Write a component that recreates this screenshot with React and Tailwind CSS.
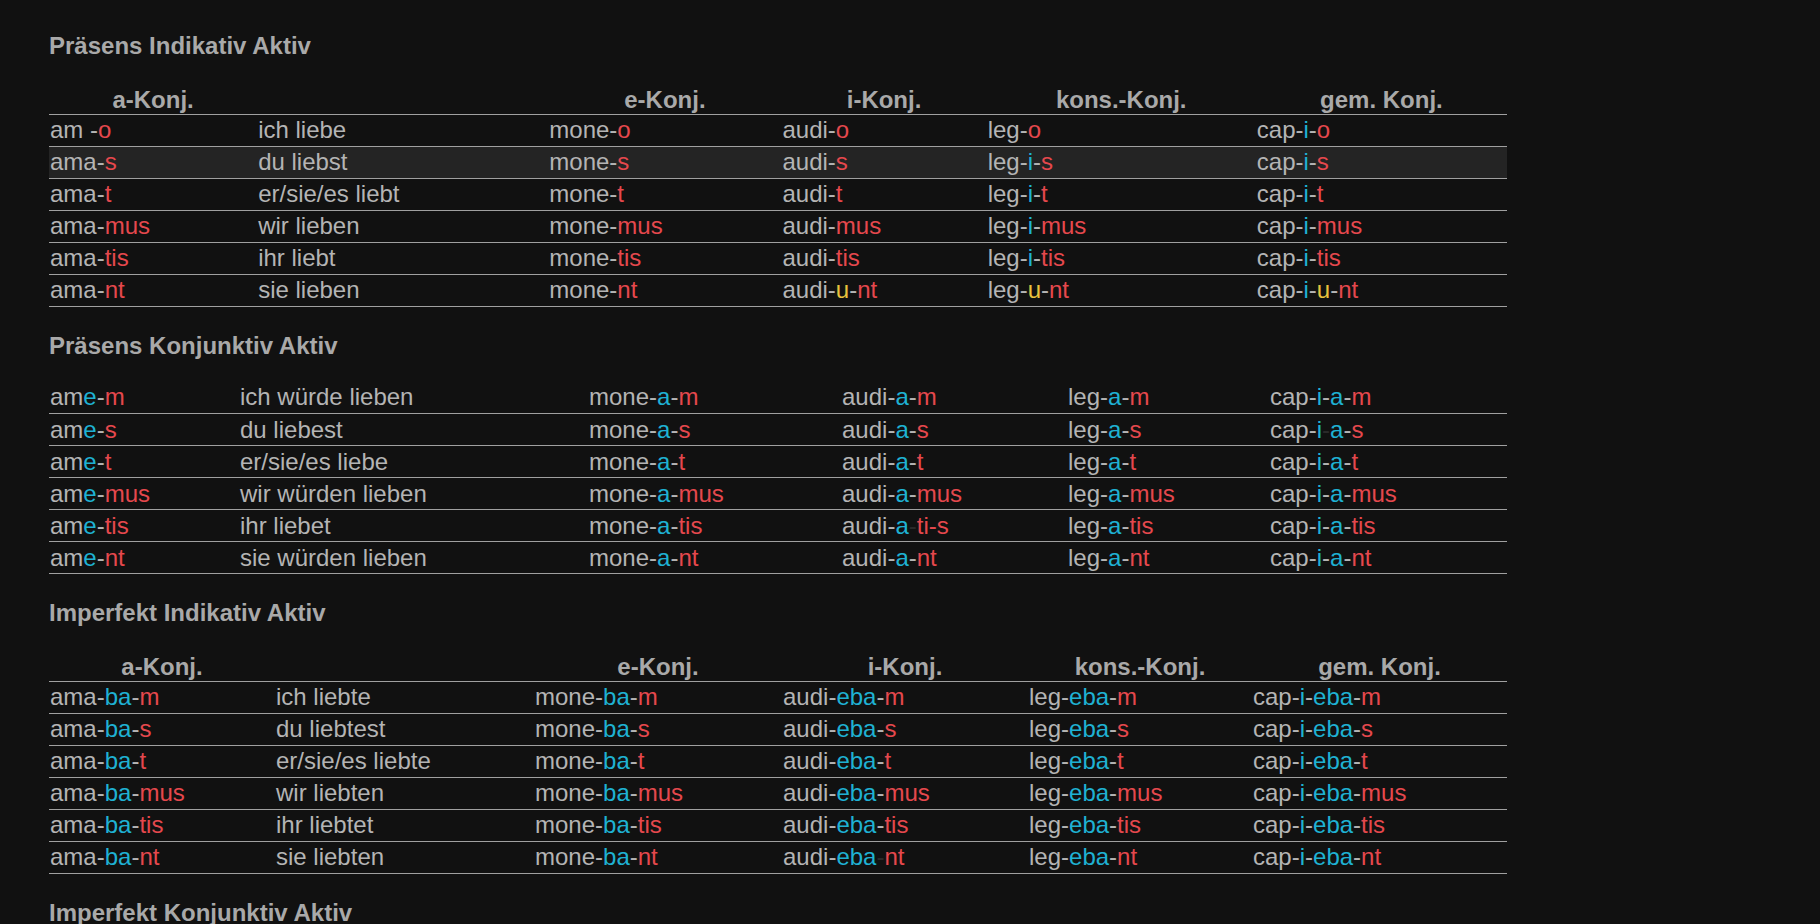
import React from 'react';

const colors = { r: 'text-[#e5484d]', c: 'text-[#1fb1d3]', y: 'text-[#e9c23c]', d: 'text-[#2a2a2a]' };

// "ama-[r:s]" -> segments
const Cell = ({ v }) => {
  const parts = v.split(/(\[[rcyd]:[^\]]*\])/).filter(Boolean);
  return parts.map((p, i) => {
    const m = p.match(/^\[([rcyd]):(.*)\]$/);
    return m ? <span key={i} className={colors[m[1]]}>{m[2]}</span> : <span key={i}>{p}</span>;
  });
};

const sections = [
  {
    title: 'Präsens Indikativ Aktiv',
    widths: [208, 291, 233, 205, 269, 251],
    head: ['a-Konj.', '', 'e-Konj.', 'i-Konj.', 'kons.-Konj.', 'gem. Konj.'],
    highlight: 1,
    rows: [
      ['am -[r:o]', 'ich liebe', 'mone-[r:o]', 'audi-[r:o]', 'leg-[r:o]', 'cap-[c:i]-[r:o]'],
      ['ama-[r:s]', 'du liebst', 'mone-[r:s]', 'audi-[r:s]', 'leg-[c:i]-[r:s]', 'cap-[c:i]-[r:s]'],
      ['ama-[r:t]', 'er/sie/es liebt', 'mone-[r:t]', 'audi-[r:t]', 'leg-[c:i]-[r:t]', 'cap-[c:i]-[r:t]'],
      ['ama-[r:mus]', 'wir lieben', 'mone-[r:mus]', 'audi-[r:mus]', 'leg-[c:i]-[r:mus]', 'cap-[c:i]-[r:mus]'],
      ['ama-[r:tis]', 'ihr liebt', 'mone-[r:tis]', 'audi-[r:tis]', 'leg-[c:i]-[r:tis]', 'cap-[c:i]-[r:tis]'],
      ['ama-[r:nt]', 'sie lieben', 'mone-[r:nt]', 'audi-[y:u]-[r:nt]', 'leg-[y:u]-[r:nt]', 'cap-[c:i]-[y:u]-[r:nt]'],
    ],
  },
  {
    title: 'Präsens Konjunktiv Aktiv',
    widths: [190, 349, 253, 226, 202, 238],
    rows: [
      ['am[c:e]-[r:m]', 'ich würde lieben', 'mone-[c:a]-[r:m]', 'audi-[c:a]-[r:m]', 'leg-[c:a]-[r:m]', 'cap-[c:i]-[c:a]-[r:m]'],
      ['am[c:e]-[r:s]', 'du liebest', 'mone-[c:a]-[r:s]', 'audi-[c:a]-[r:s]', 'leg-[c:a]-[r:s]', 'cap-[c:i][d:-][c:a]-[r:s]'],
      ['am[c:e]-[r:t]', 'er/sie/es liebe', 'mone-[c:a]-[r:t]', 'audi-[c:a]-[r:t]', 'leg-[c:a]-[r:t]', 'cap-[c:i]-[c:a]-[r:t]'],
      ['am[c:e]-[r:mus]', 'wir würden lieben', 'mone-[c:a]-[r:mus]', 'audi-[c:a]-[r:mus]', 'leg-[c:a]-[r:mus]', 'cap-[c:i]-[c:a]-[r:mus]'],
      ['am[c:e]-[r:tis]', 'ihr liebet', 'mone-[c:a]-[r:tis]', 'audi-[c:a][d:-][r:ti-s]', 'leg-[c:a]-[r:tis]', 'cap-[c:i]-[c:a]-[r:tis]'],
      ['am[c:e]-[r:nt]', 'sie würden lieben', 'mone-[c:a]-[r:nt]', 'audi-[c:a]-[r:nt]', 'leg-[c:a]-[r:nt]', 'cap-[c:i]-[c:a]-[r:nt]'],
    ],
  },
  {
    title: 'Imperfekt Indikativ Aktiv',
    widths: [226, 259, 248, 246, 224, 255],
    head: ['a-Konj.', '', 'e-Konj.', 'i-Konj.', 'kons.-Konj.', 'gem. Konj.'],
    rows: [
      ['ama-[c:ba]-[r:m]', 'ich liebte', 'mone-[c:ba]-[r:m]', 'audi-[c:eba]-[r:m]', 'leg-[c:eba]-[r:m]', 'cap-[c:i]-[c:eba]-[r:m]'],
      ['ama-[c:ba]-[r:s]', 'du liebtest', 'mone-[c:ba]-[r:s]', 'audi-[c:eba]-[r:s]', 'leg-[c:eba]-[r:s]', 'cap-[c:i]-[c:eba]-[r:s]'],
      ['ama-[c:ba]-[r:t]', 'er/sie/es liebte', 'mone-[c:ba]-[r:t]', 'audi-[c:eba]-[r:t]', 'leg-[c:eba]-[r:t]', 'cap-[c:i]-[c:eba]-[r:t]'],
      ['ama-[c:ba]-[r:mus]', 'wir liebten', 'mone-[c:ba]-[r:mus]', 'audi-[c:eba]-[r:mus]', 'leg-[c:eba]-[r:mus]', 'cap-[c:i]-[c:eba]-[r:mus]'],
      ['ama-[c:ba]-[r:tis]', 'ihr liebtet', 'mone-[c:ba]-[r:tis]', 'audi-[c:eba]-[r:tis]', 'leg-[c:eba]-[r:tis]', 'cap-[c:i]-[c:eba]-[r:tis]'],
      ['ama-[c:ba]-[r:nt]', 'sie liebten', 'mone-[c:ba]-[r:nt]', 'audi-[c:eba][d:-][r:nt]', 'leg-[c:eba]-[r:nt]', 'cap-[c:i]-[c:eba]-[r:nt]'],
    ],
  },
];

const Section = ({ s }) => (
  <div className="mb-[25px]">
    <h2 className="text-[24px] leading-[28px] font-bold text-[#a9a9a9] mb-[22px]">{s.title}</h2>
    <table className="table-fixed border-collapse w-[1458px] text-[24px] text-[#b4b4b4]">
      <colgroup>
        {s.widths.map((w, i) => <col key={i} style={{ width: w }} />)}
      </colgroup>
      {s.head && (
        <thead>
          <tr className="border-b border-[#a0a0a0] h-[32px]">
            {s.head.map((h, i) => (
              <th key={i} className="font-bold text-[#a9a9a9] text-center leading-none align-bottom pb-[2px]">{h}</th>
            ))}
          </tr>
        </thead>
      )}
      <tbody>
        {s.rows.map((r, i) => (
          <tr key={i} className={`border-b border-[#a0a0a0] h-[32px] ${s.highlight === i ? 'bg-[#242424]' : ''}`}>
            {r.map((c, j) => (
              <td key={j} className="p-0 pl-[1px] leading-none whitespace-nowrap"><Cell v={c} /></td>
            ))}
          </tr>
        ))}
      </tbody>
    </table>
  </div>
);

export default function App() {
  return (
    <div className="min-h-screen h-[924px] overflow-hidden bg-[#111111] pt-[32px] pl-[49px]" style={{ fontFamily: '"Liberation Sans", Arial, sans-serif' }}>
      {sections.map((s) => <Section key={s.title} s={s} />)}
      <h2 className="text-[24px] leading-[28px] font-bold text-[#a9a9a9]">Imperfekt Konjunktiv Aktiv</h2>
    </div>
  );
}
